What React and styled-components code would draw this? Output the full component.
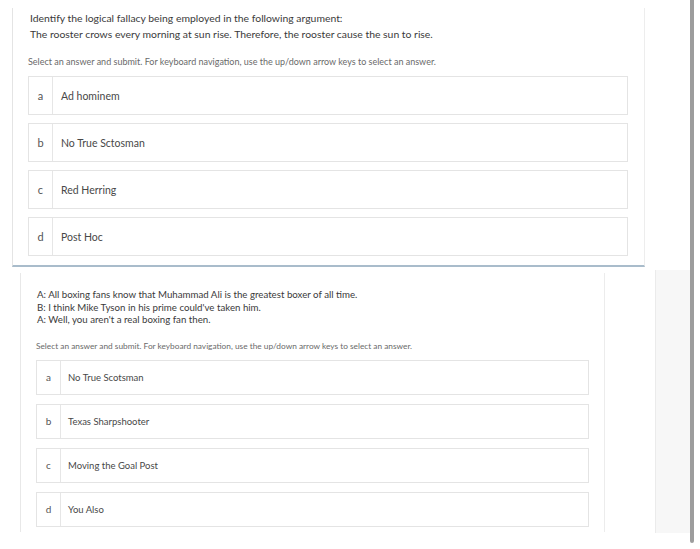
import React from "react";
import styled, { createGlobalStyle } from "styled-components";

const GlobalStyle = createGlobalStyle`
  body {
    margin: 0;
    background: #fff;
    font-family: Lato, "Open Sans", sans-serif;
  }
`;

const Page = styled.div`
  display: flex;
  width: 700px;
  height: 549px;
  overflow: hidden;
  background: #fff;
`;

const Main = styled.div`
  width: 690px;
  display: flex;
  flex-direction: column;
`;

const Scrollbar = styled.div`
  width: 4px;
  height: 543px;
  background: #9d9d9d;
  border-radius: 0 0 2px 2px;
`;

const TopCard = styled.div`
  margin: 8px 0 0 12px;
  width: 600px;
  height: 255px;
  padding: 2px 16px 0 15px;
  border-left: 1px solid #e4e4e4;
  border-right: 1px solid #ededed;
  border-bottom: 2px solid #a9bccb;
`;

const BottomRow = styled.div`
  display: flex;
  align-items: flex-start;
`;

const SecondCard = styled.div`
  margin: 6px 0 0 20px;
  width: 554px;
  height: 244px;
  padding: 15px 15px 0 15px;
  border-left: 1px solid #e8e8e8;
  border-right: 1px solid #ececec;
`;

const SidePanel = styled.div`
  margin: 3px 0 0 50px;
  width: 34px;
  height: 263px;
  background: #f7f7f7;
  border-left: 1px solid #ebebeb;
`;

const Question = styled.div`
  padding-left: ${(p) => (p.$small ? "1px" : "2px")};
  font-size: ${(p) => (p.$small ? "9.7px" : "10.4px")};
  line-height: ${(p) => (p.$small ? "12.5px" : "16px")};
  color: #3a3a3a;
`;

const Hint = styled.div`
  margin-top: ${(p) => (p.$small ? "15px" : "14px")};
  font-size: ${(p) => (p.$small ? "8.3px" : "9px")};
  line-height: ${(p) => (p.$small ? "11px" : "12px")};
  color: #6a6a6a;
  white-space: nowrap;
`;

const Options = styled.div`
  margin-top: 8px;
  display: flex;
  flex-direction: column;
  gap: ${(p) => (p.$small ? "9px" : "8px")};
`;

const Option = styled.div`
  display: flex;
  align-items: stretch;
  height: ${(p) => (p.$small ? "33px" : "37px")};
  border: 1px solid #e4e4e4;
  background: #fff;
`;

const Letter = styled.div`
  width: 23px;
  border-right: 1px solid #e6e6e6;
  display: flex;
  align-items: center;
  justify-content: center;
  font-size: ${(p) => (p.$small ? "10px" : "11px")};
  color: #555;
`;

const Label = styled.div`
  display: flex;
  align-items: center;
  padding-left: ${(p) => (p.$small ? "7px" : "8px")};
  font-size: ${(p) => (p.$small ? "9.5px" : "10.5px")};
  color: #484848;
`;

const hint =
  "Select an answer and submit. For keyboard navigation, use the up/down arrow keys to select an answer.";

const AnswerList = ({ items, small }) => (
  <Options $small={small}>
    {items.map((text, i) => (
      <Option key={text} $small={small}>
        <Letter $small={small}>{"abcd"[i]}</Letter>
        <Label $small={small}>{text}</Label>
      </Option>
    ))}
  </Options>
);

export default function App() {
  return (
    <Page>
      <GlobalStyle />
      <Main>
        <TopCard>
          <Question>
            Identify the logical fallacy being employed in the following argument:
            <br />
            The rooster crows every morning at sun rise. Therefore, the rooster cause the sun to rise.
          </Question>
          <Hint>{hint}</Hint>
          <AnswerList items={["Ad hominem", "No True Sctosman", "Red Herring", "Post Hoc"]} />
        </TopCard>
        <BottomRow>
          <SecondCard>
            <Question $small>
              A: All boxing fans know that Muhammad Ali is the greatest boxer of all time.
              <br />
              B: I think Mike Tyson in his prime could've taken him.
              <br />
              A: Well, you aren't a real boxing fan then.
            </Question>
            <Hint $small>{hint}</Hint>
            <AnswerList
              small
              items={["No True Scotsman", "Texas Sharpshooter", "Moving the Goal Post", "You Also"]}
            />
          </SecondCard>
          <SidePanel />
        </BottomRow>
      </Main>
      <Scrollbar />
    </Page>
  );
}
